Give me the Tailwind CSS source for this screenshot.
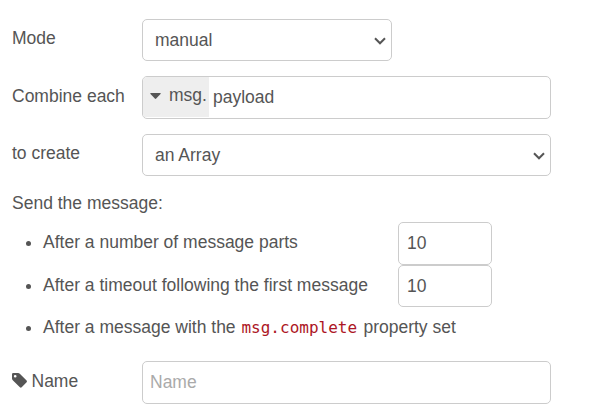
<!DOCTYPE html>
<html lang="en">
<head>
<meta charset="utf-8">
<title>Join node</title>
<script src="https://cdn.jsdelivr.net/npm/@tailwindcss/browser@4"></script>
</head>
<body class="bg-white font-['Liberation_Sans',Arial,sans-serif] text-[17.5px] leading-[25px] text-[#555]">
<form class="flex w-[593px] h-[413px] flex-col pl-3 pt-[19px] overflow-hidden">
  <div class="flex h-[42px] mb-[15px]">
    <label class="w-[130px] pt-[7px]">Mode</label>
    <div class="flex w-[250px] items-center justify-between rounded-[5px] border border-[#ccc] pl-3 pr-[5px]">
      <span>manual</span>
      <svg class="mt-px w-3 h-2" viewBox="0 0 12 8" fill="none" stroke="#555" stroke-width="2"><path d="M1 1.3 6 6.3 11 1.3"/></svg>
    </div>
  </div>
  <div class="flex h-[43px] mb-[15px]">
    <label class="w-[130px] pt-[8px]">Combine each</label>
    <div class="flex w-[409px] rounded-[5px] border border-[#ccc] overflow-hidden">
      <div class="flex w-[66px] h-[40px] bg-[#eee] pl-[7px]">
        <svg class="mt-4 mr-2 w-[11px] h-[7px]" viewBox="0 0 11 7" fill="#555"><path d="M.8 0h9.4q.9.2.3 1L6.2 5.6q-.7.6-1.4 0L.5 1Q-.1.2.8 0Z"/></svg>
        <span class="pt-[6px]">msg.</span>
      </div>
      <span class="pl-1 pt-2">payload</span>
    </div>
  </div>
  <div class="flex h-[42px] mb-[15px]">
    <label class="w-[130px] pt-[7px]">to create</label>
    <div class="flex w-[409px] items-center justify-between rounded-[5px] border border-[#ccc] pl-3 pr-[5px]">
      <span>an Array</span>
      <svg class="mt-px w-3 h-2" viewBox="0 0 12 8" fill="none" stroke="#555" stroke-width="2"><path d="M1 1.3 6 6.3 11 1.3"/></svg>
    </div>
  </div>
  <p class="h-[31px]">Send the message:</p>
  <ul class="h-[139px]">
    <li class="flex h-[43px]">
      <span class="mt-[19px] ml-[14px] mr-3 size-[5px] rounded-full bg-[#555]"></span>
      <span class="w-[355px] pt-[8px]">After a number of message parts</span>
      <span class="w-[94px] rounded-[5px] border border-[#ccc] pl-2 pt-[8px]">10</span>
    </li>
    <li class="flex h-[42px]">
      <span class="mt-[19px] ml-[14px] mr-3 size-[5px] rounded-full bg-[#555]"></span>
      <span class="w-[355px] pt-[8px]">After a timeout following the first message</span>
      <span class="w-[94px] rounded-[5px] border border-[#ccc] pl-2 pt-[8px]">10</span>
    </li>
    <li class="flex h-[43px]">
      <span class="mt-[19px] ml-[14px] mr-3 size-[5px] rounded-full bg-[#555]"></span>
      <span class="pt-[8px] whitespace-pre">After a message with the <code class="ml-px mr-[1.5px] font-['DejaVu_Sans_Mono',monospace] text-[16px] leading-none text-[#ad1625]">msg.complete</code> property set</span>
    </li>
  </ul>
  <div class="flex h-[43px]">
    <label class="flex w-[130px] pt-[8px]">
      <svg class="mt-[4px] mr-[4.5px] w-[15px] h-[15px]" viewBox="0 0 15 15" fill="#555"><path fill-rule="evenodd" d="M1.3 0H6.1Q7 0 7.8.8L14.6 7.5Q15.3 8.3 14.6 9.2L9.7 14.3Q8.8 15.1 7.9 14.3L1 7.4Q0 6.4 0 5.4V1.3Q0 0 1.3 0ZM3.2 1.9A1.35 1.35 0 1 0 3.2 4.6 1.35 1.35 0 1 0 3.2 1.9Z"/></svg>
      <span>Name</span>
    </label>
    <div class="w-[409px] rounded-[5px] border border-[#ccc] pl-[7px] pt-[8px] text-[#aaa]">Name</div>
  </div>
</form>
</body>
</html>
